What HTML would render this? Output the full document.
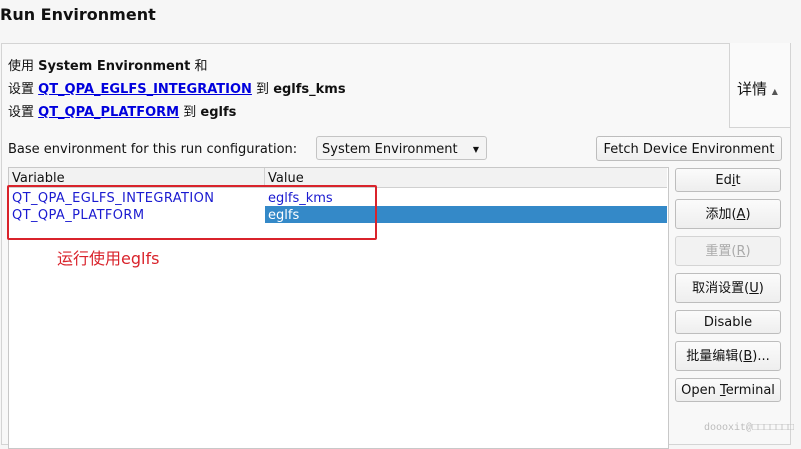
<!DOCTYPE html><html><head><meta charset="utf-8"><style>
body{margin:0;width:801px;height:438px;background:#f6f6f6;font-family:"DejaVu Sans","Noto Sans CJK SC",sans-serif;font-size:13px;color:#111;position:relative;overflow:hidden}
.a{position:absolute;white-space:nowrap}
.btn{position:absolute;left:675px;width:106px;border:1px solid #bdbdbd;border-radius:3px;background:linear-gradient(#fbfbfb,#eeeeee);text-align:center;box-sizing:border-box;font-size:13px}
b{font-weight:bold}
a{color:#0000dd;font-weight:bold;text-decoration:underline}
</style></head><body>
<div class="a" style="left:0;top:5px;font-size:16px;font-weight:bold">Run Environment</div>
<div class="a" style="left:1px;top:43px;width:788px;height:400px;border:1px solid #d4d4d4;background:#f8f8f8"></div>
<div class="a" style="left:729px;top:43px;width:60px;height:84px;border-left:1px solid #d4d4d4;border-bottom:1px solid #d4d4d4;background:#fafafa"></div>
<div class="a" style="left:737px;top:78px;font-size:15px">详情 <span style="font-size:8px;color:#555">▲</span></div>
<div class="a" style="left:8px;top:55px;line-height:23px">使用 <b>System Environment</b> 和<br>设置 <a>QT_QPA_EGLFS_INTEGRATION</a> 到 <b>eglfs_kms</b><br>设置 <a>QT_QPA_PLATFORM</a> 到 <b>eglfs</b></div>
<div class="a" style="left:8px;top:142px">Base environment for this run configuration:</div>
<div class="a" style="left:316px;top:136px;width:171px;height:24px;border:1px solid #c4c4c4;border-radius:3px;background:#f4f4f4;box-sizing:border-box;padding:5px 5px">System Environment <span style="position:absolute;right:7px;font-size:8px;top:8px">▼</span></div>
<div class="btn" style="left:596px;width:186px;top:136px;height:25px;line-height:25px">Fetch Device Environment</div>
<div class="a" style="left:8px;top:167px;width:659px;height:280px;border:1px solid #c8c8c8;background:#fff"></div>
<div class="a" style="left:9px;top:168px;width:658px;height:19px;background:#f2f2f2;border-bottom:1px solid #d0d0d0"></div>
<div class="a" style="left:264px;top:168px;width:1px;height:19px;background:#d0d0d0"></div>
<div class="a" style="left:12px;top:171px">Variable</div>
<div class="a" style="left:268px;top:171px">Value</div>
<div class="a" style="left:265px;top:206px;width:402px;height:17px;background:#3489c8"></div>
<div class="a" style="left:12px;top:190px;color:#1a1ad0;line-height:17px;letter-spacing:0.4px">QT_QPA_EGLFS_INTEGRATION<br>QT_QPA_PLATFORM</div>
<div class="a" style="left:268px;top:190px;color:#1a1ad0;line-height:17px">eglfs_kms<br><span style="color:#fff">eglfs</span></div>
<div class="a" style="left:7px;top:185px;width:366px;height:51px;border:2px solid #d9232b;border-radius:2px"></div>
<div class="a" style="left:57px;top:245px;color:#d9232b;font-size:16px">运行使用eglfs</div>
<div class="btn" style="top:168px;height:24px;line-height:24px">Ed<u>i</u>t</div>
<div class="btn" style="top:199px;height:30px;line-height:30px">添加(<u>A</u>)</div>
<div class="btn" style="top:236px;height:30px;line-height:30px;color:#aaa;background:#f2f2f2;border-color:#d4d4d4">重置(<u>R</u>)</div>
<div class="btn" style="top:273px;height:30px;line-height:30px">取消设置(<u>U</u>)</div>
<div class="btn" style="top:310px;height:24px;line-height:24px">Disable</div>
<div class="btn" style="top:341px;height:30px;line-height:30px">批量编辑(<u>B</u>)...</div>
<div class="btn" style="top:378px;height:24px;line-height:24px">Open <u>T</u>erminal</div>
<div class="a" style="left:704px;top:423px;font-size:10px;color:#bbb;font-family:'Liberation Mono',monospace">doooxit@□□□□□□□</div>
</body></html>
